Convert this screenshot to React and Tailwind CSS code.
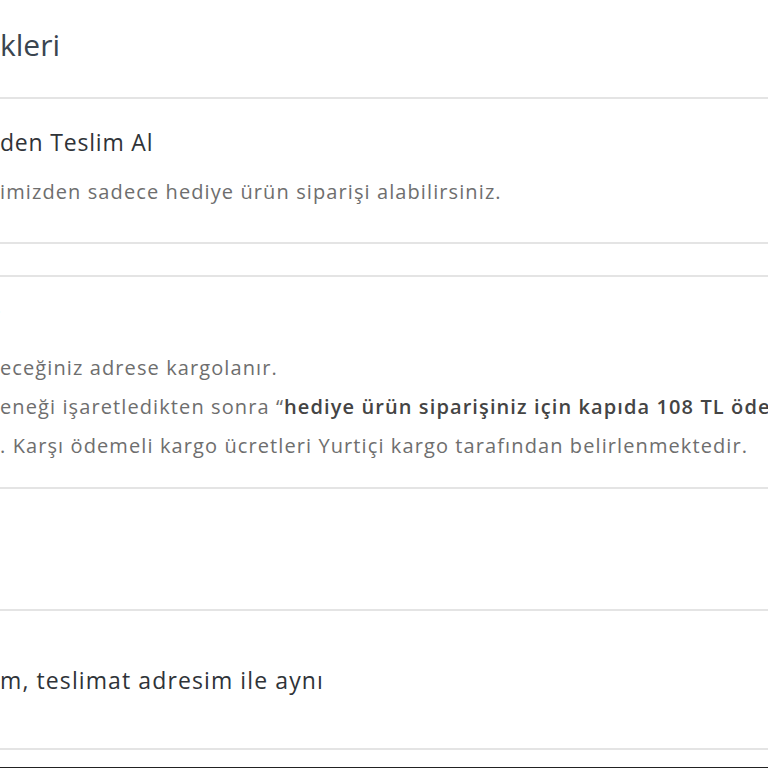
const CUT = 'w-[320px] shrink-0 text-right'

function Line({ prefix, children, className = '' }) {
    return (
        <div className={`flex whitespace-nowrap ${className}`}>
            <span className={CUT}>{prefix}</span>
            <span>{children}</span>
        </div>
    )
}

function App() {
    return (
        <div className="w-full h-[768px] overflow-hidden bg-white font-['Open_Sans','Noto_Sans',sans-serif]">
            <div className="ml-[-320px] w-[calc(100%+320px)] flex flex-col">
                {/* Title */}
                <div className="h-[99px] border-b-2 border-[#e4e4e4] pt-[24px]">
                    <Line prefix="Teslimat Seçene" className="text-[30px] leading-[42px] text-[#3a4550]">kleri</Line>
                </div>

                {/* Şubeden teslim */}
                <div className="h-[145px] border-b-2 border-[#e4e4e4] pt-[24px]">
                    <Line prefix="Şube" className="text-[23px] leading-[38px] tracking-[0.8px] text-[#2f3338]">den Teslim Al</Line>
                    <Line prefix="Şubeler" className="mt-[18px] text-[20px] leading-[26px] text-[#6e6e6e] tracking-[1.1px]">
                        imizden sadece hediye ürün siparişi alabilirsiniz.
                    </Line>
                </div>

                <div className="h-[31px]" />

                {/* Kargo */}
                <div className="h-[214px] border-y-2 border-[#e4e4e4] pt-[20px]">
                    <Line prefix="Kargo ile Gönder" className="text-[23px] leading-[36px] text-[#2f3338]" />
                    <div className="mt-[15px] text-[20px] leading-[39px] text-[#6e6e6e] tracking-[1.1px]">
                        <Line prefix="Siparişiniz belirt">eceğiniz adrese kargolanır.</Line>
                        <Line prefix="Kargo seç">
                            eneği işaretledikten sonra “<b className="font-semibold text-[#444]">hediye ürün siparişiniz için kapıda 108 TL ödeme yapmanız gerekmektedir</b>”
                        </Line>
                        <Line prefix="gerekmektedir">. Karşı ödemeli kargo ücretleri Yurtiçi kargo tarafından belirlenmektedir.</Line>
                    </div>
                </div>

                {/* Fatura adresi */}
                <div className="h-[122px] border-b-2 border-[#e4e4e4] pt-[40px]">
                    <Line prefix="Fatura Adresi" className="text-[23px] leading-[36px] text-[#2f3338]" />
                </div>

                <div className="h-[139px] border-b-2 border-[#e4e4e4] pt-[50px]">
                    <Line prefix="Fatura adresi" className="text-[23px] leading-[38px] tracking-[1.1px] text-[#2f3338]">m, teslimat adresim ile aynı</Line>
                </div>

                <div className="h-[17px]" />
                <div className="h-[2px] bg-[#222]" />
            </div>
        </div>
    )
}

export default App
